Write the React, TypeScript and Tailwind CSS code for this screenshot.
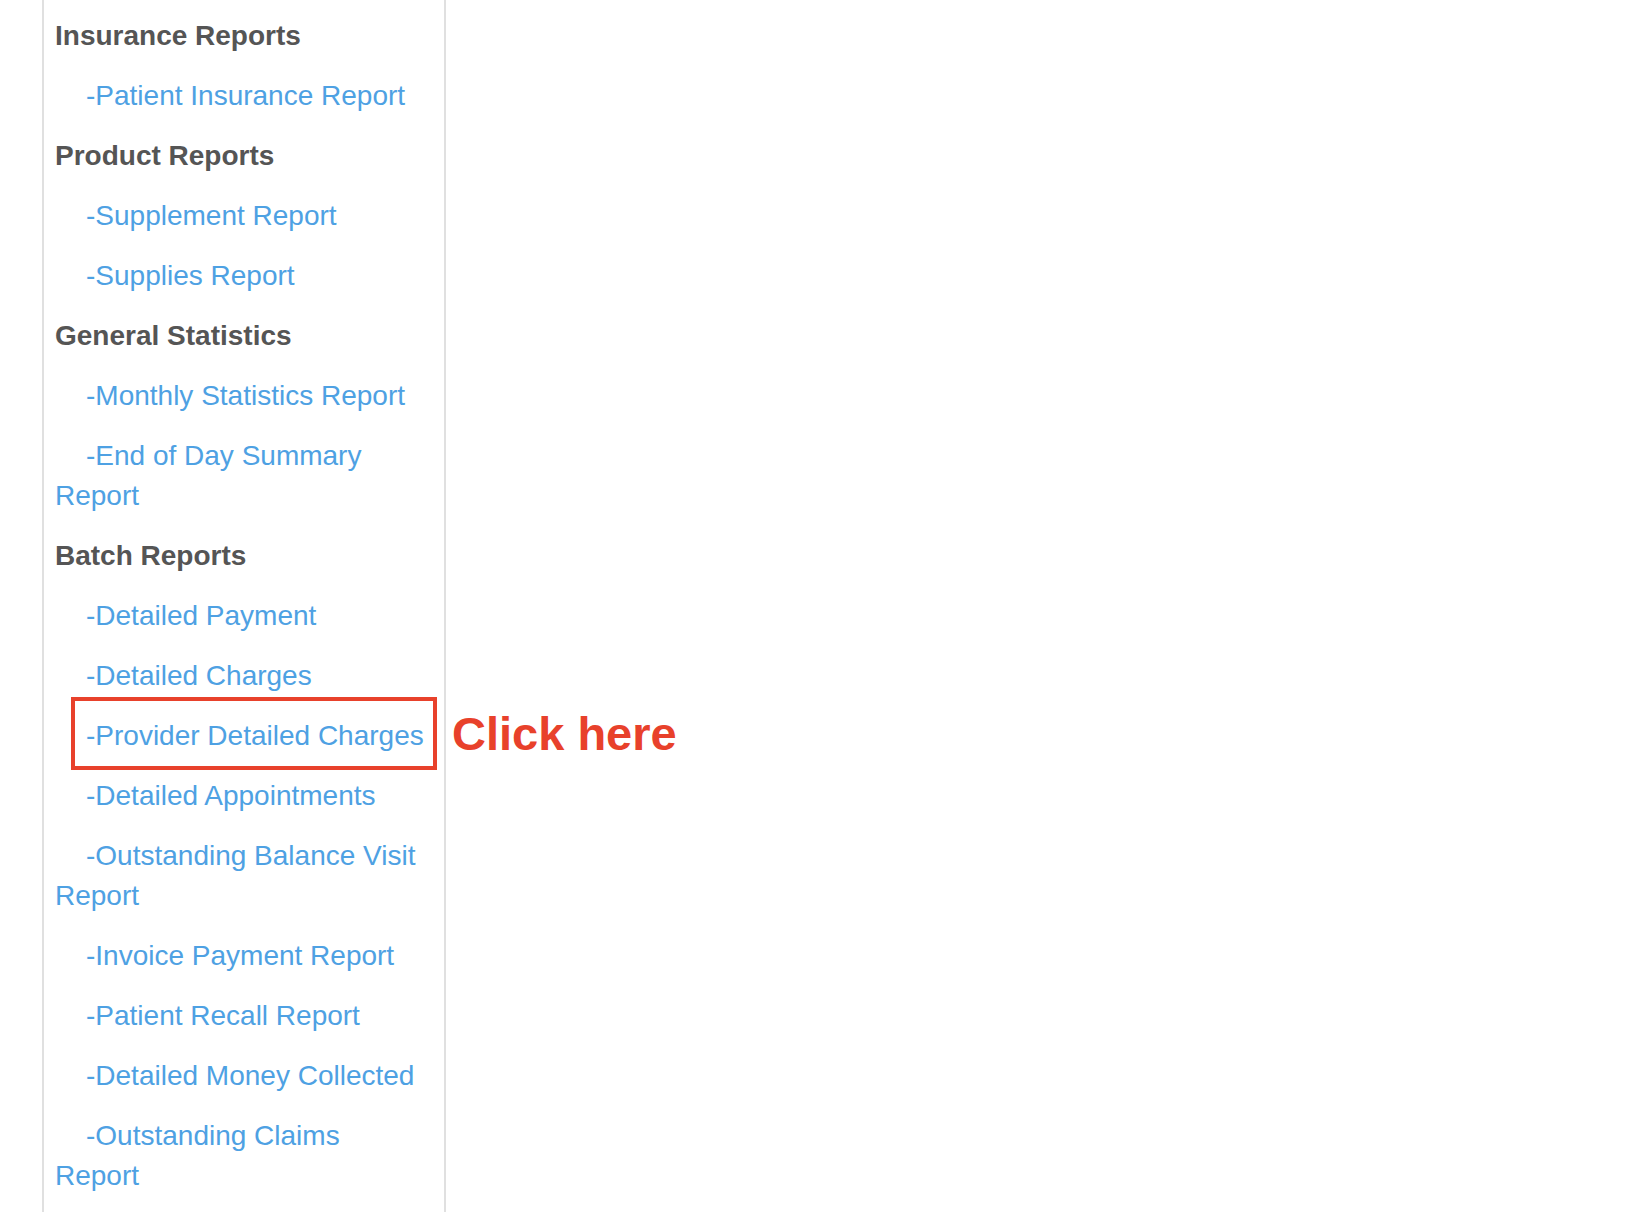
const font = { fontFamily: '"Helvetica Neue", Helvetica, "Liberation Sans", Arial, sans-serif' };

type Item = { text: string; kind: "head" | "link"; mark?: boolean };

const items: Item[] = [
  { text: "Insurance Reports", kind: "head" },
  { text: "-Patient Insurance Report", kind: "link" },
  { text: "Product Reports", kind: "head" },
  { text: "-Supplement Report", kind: "link" },
  { text: "-Supplies Report", kind: "link" },
  { text: "General Statistics", kind: "head" },
  { text: "-Monthly Statistics Report", kind: "link" },
  { text: "-End of Day Summary Report", kind: "link" },
  { text: "Batch Reports", kind: "head" },
  { text: "-Detailed Payment", kind: "link" },
  { text: "-Detailed Charges", kind: "link" },
  { text: "-Provider Detailed Charges", kind: "link", mark: true },
  { text: "-Detailed Appointments", kind: "link" },
  { text: "-Outstanding Balance Visit Report", kind: "link" },
  { text: "-Invoice Payment Report", kind: "link" },
  { text: "-Patient Recall Report", kind: "link" },
  { text: "-Detailed Money Collected", kind: "link" },
  { text: "-Outstanding Claims Report", kind: "link" },
];

export default function App() {
  return (
    <div className="min-h-[1212px] bg-white overflow-hidden" style={font}>
      <div className="ml-[42px] w-[404px] min-h-[1212px] border-x-2 border-[#e0e0e0] pl-[11px] pr-[16px] pt-4">
        {items.map((item, i) =>
          item.kind === "head" ? (
            <p key={i} className="mb-5 text-[28px] leading-[40px] font-bold text-[#555555]">
              {item.text}
            </p>
          ) : (
            <p key={i} className="relative mb-5 text-[28px] leading-[40px] indent-[31px] text-[#4ea1e3]">
              {item.text}
              {item.mark && (
                <>
                  <span className="absolute left-[16px] -top-[19px] w-[366px] h-[73px] border-[4px] border-[#e8412b]" />
                  <span className="absolute left-[397px] -top-[12px] indent-0 whitespace-nowrap text-[47px] leading-[60px] font-bold text-[#e8412b]">
                    Click here
                  </span>
                </>
              )}
            </p>
          )
        )}
      </div>
    </div>
  );
}
